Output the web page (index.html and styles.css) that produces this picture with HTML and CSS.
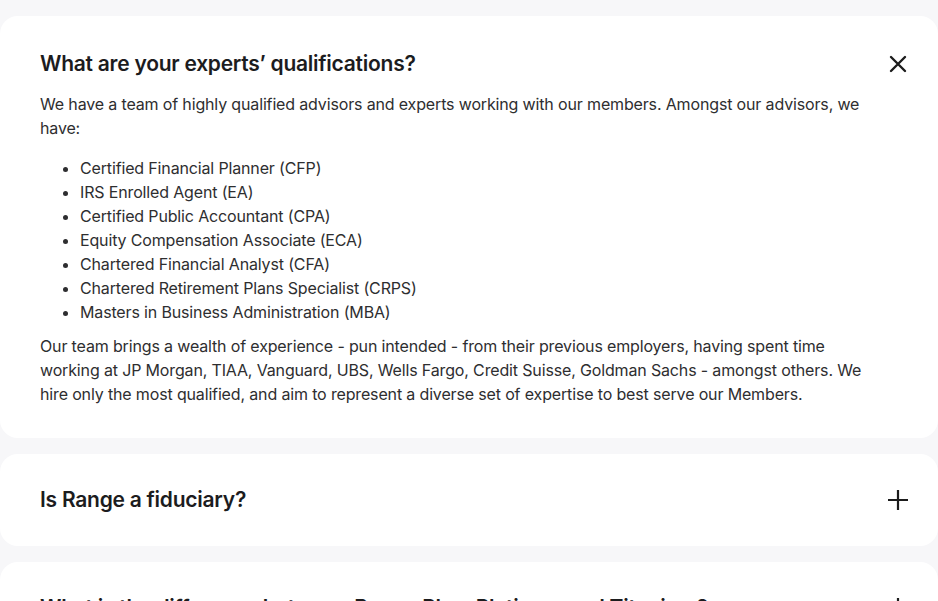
FILE: index.html
```html
<!DOCTYPE html>
<html lang="en">
<head>
  <meta charset="UTF-8">
  <title>FAQ</title>
  <link rel="stylesheet" href="styles.css">
</head>
<body>
  <div class="faq">
    <div class="faq-item open">
      <div class="faq-head">
        <h3>What are your experts’ qualifications?</h3>
        <button class="toggle" aria-label="Close">
          <svg width="18" height="18" viewBox="0 0 18 18"><path d="M2 2 L16 16 M16 2 L2 16" stroke="#1c1c1c" stroke-width="2.4" stroke-linecap="round"/></svg>
        </button>
      </div>
      <div class="faq-body">
        <p>We have a team of highly qualified advisors and experts working with our members. Amongst our advisors, we have:</p>
        <ul>
          <li>Certified Financial Planner (CFP)</li>
          <li>IRS Enrolled Agent (EA)</li>
          <li>Certified Public Accountant (CPA)</li>
          <li>Equity Compensation Associate (ECA)</li>
          <li>Chartered Financial Analyst (CFA)</li>
          <li>Chartered Retirement Plans Specialist (CRPS)</li>
          <li>Masters in Business Administration (MBA)</li>
        </ul>
        <p>Our team brings a wealth of experience - pun intended - from their previous employers, having spent time working at JP Morgan, TIAA, Vanguard, UBS, Wells Fargo, Credit Suisse, Goldman Sachs - amongst others. We hire only the most qualified, and aim to represent a diverse set of expertise to best serve our Members.</p>
      </div>
    </div>

    <div class="faq-item">
      <div class="faq-head">
        <h3>Is Range a fiduciary?</h3>
        <button class="toggle" aria-label="Open">
          <svg width="22" height="22" viewBox="0 0 22 22"><path d="M11 1 V21 M1 11 H21" stroke="#1c1c1c" stroke-width="2.2"/></svg>
        </button>
      </div>
    </div>

    <div class="faq-item">
      <div class="faq-head">
        <h3>What is the difference between Range Plus, Platinum and Titanium?</h3>
        <button class="toggle" aria-label="Open">
          <svg width="22" height="22" viewBox="0 0 22 22"><path d="M11 1 V21 M1 11 H21" stroke="#1c1c1c" stroke-width="2.2"/></svg>
        </button>
      </div>
    </div>
  </div>
</body>
</html>
```

FILE: styles.css
```css
body {
  margin: 0;
  background-color: #f7f7f9;
  font-family: Inter, "Noto Sans", sans-serif;
  color: #2e2e30;
}

.faq {
  display: flex;
  flex-direction: column;
  gap: 16px;
  padding-top: 16px;
}

.faq-item {
  background-color: #fff;
  border-radius: 18px;
  padding: 30px 40px;
}

.faq-item.open {
  padding: 32px 40px;
}

.faq-head {
  display: flex;
  align-items: center;
  justify-content: space-between;
}

.faq-head h3 {
  margin: 0;
  font-size: 21px;
  font-weight: 600;
  line-height: 32px;
  letter-spacing: -0.25px;
  color: #1c1c1e;
}

.toggle {
  background: none;
  border: none;
  padding: 0;
  margin-right: -11px;
  width: 22px;
  height: 22px;
  display: flex;
  align-items: center;
  justify-content: center;
  cursor: pointer;
}

.faq-body {
  max-width: 822px;
  margin-top: 12px;
  font-size: 16px;
  line-height: 24px;
  letter-spacing: -0.15px;
}

.faq-body p {
  margin: 0;
}

.faq-body ul {
  margin: 16px 0 10px;
  padding-left: 40px;
}
```
